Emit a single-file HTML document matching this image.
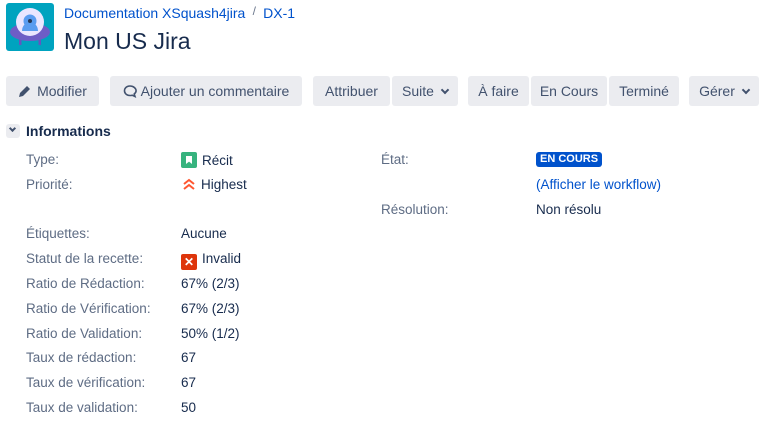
<!DOCTYPE html>
<html><head><meta charset="utf-8"><style>
*{box-sizing:border-box;margin:0;padding:0}
body{width:763px;height:425px;background:#fff;font-family:"Liberation Sans",sans-serif;color:#172b4d;position:relative;overflow:hidden;font-size:14px}
.a{position:absolute;white-space:nowrap}
.btn{position:absolute;top:76px;height:30px;background:#ebecf0;border-radius:3px;color:#42526e;font-size:14px;line-height:30px;text-align:center}
.lbl{position:absolute;left:26px;color:#5e6c84;font-size:13.5px;white-space:nowrap}
.val{position:absolute;left:181px;color:#172b4d;font-size:13.5px;white-space:nowrap}
.chev{display:inline-block;width:6px;height:6px;border-right:2px solid #42526e;border-bottom:2px solid #42526e;transform:rotate(45deg);margin-left:8px;position:relative;top:-3px}
</style></head><body>
<svg class="a" style="left:6px;top:3px" width="48" height="48" viewBox="0 0 48 48">
<rect width="48" height="48" rx="3" fill="#00a3bf"/>
<rect x="13" y="34" width="2.5" height="8" fill="#6554c0"/><rect x="32.5" y="34" width="2.5" height="8" fill="#6554c0"/>
<ellipse cx="24" cy="29" rx="20" ry="9" fill="#6e5dc6"/>
<circle cx="24" cy="19" r="14" fill="#eae6ff"/>
<path d="M16 28a8 9 0 0 1 16 0z" fill="#5a9cf0"/>
<circle cx="24" cy="18" r="6.5" fill="#5a9cf0"/><circle cx="24" cy="18" r="2" fill="#253858"/>
</svg>
<div class="a" style="left:64px;top:5px;font-size:14px;color:#0052cc">Documentation XSquash4jira <span style="color:#6b778c;font-size:12px;position:relative;top:-3px">&nbsp;/&nbsp;</span> DX-1</div>
<div class="a" style="left:64px;top:28px;font-size:23px;color:#172b4d">Mon US Jira</div>

<div class="btn" style="left:6px;width:93px"><svg width="14" height="14" viewBox="0 0 14 14" style="vertical-align:-2px;margin-right:5px"><path d="M1 13l1-4 7-7 3 3-7 7z" fill="#42526e"/></svg>Modifier</div>
<div class="btn" style="left:110px;width:192px"><svg width="14" height="14" viewBox="0 0 14 14" style="vertical-align:-2px;margin-right:4px"><path d="M7 2C3.5 2 1.5 4.3 1.5 6.8S3.5 11.5 7 11.5c.8 0 1.5-.1 2.1-.3L12 12.5l-.8-2.5c1.2-.9 1.9-2 1.9-3.2C13.1 4.3 10.5 2 7 2z" fill="none" stroke="#42526e" stroke-width="1.6"/></svg>Ajouter un commentaire</div>
<div class="btn" style="left:313px;width:77px">Attribuer</div>
<div class="btn" style="left:392px;width:66px">Suite<span class="chev"></span></div>
<div class="btn" style="left:468px;width:61px">À faire</div>
<div class="btn" style="left:531px;width:76px">En Cours</div>
<div class="btn" style="left:609px;width:70px">Terminé</div>
<div class="btn" style="left:689px;width:70px">Gérer<span class="chev"></span></div>

<div class="a" style="left:6px;top:124px;width:14px;height:14px;background:#ebecf0;border-radius:3px"><span class="chev" style="position:absolute;left:-4px;top:2px;width:5px;height:5px;border-color:#42526e"></span></div>
<div class="a" style="left:26px;top:123px;font-size:14px;font-weight:bold;color:#172b4d">Informations</div>

<div class="lbl" style="top:152px">Type:</div>
<div class="val" style="top:152px"><span style="display:inline-block;width:16px;height:16px;background:#36b37e;border-radius:2px;vertical-align:-3px;margin-right:5px;position:relative"><span style="position:absolute;left:5px;top:4px;width:6px;height:8px;background:#fff;clip-path:polygon(0 0,100% 0,100% 100%,50% 70%,0 100%)"></span></span>Récit</div>
<div class="lbl" style="top:177px">Priorité:</div>
<div class="val" style="top:177px"><svg width="16" height="14" viewBox="0 0 16 14" style="vertical-align:-2px;margin-right:4px"><path d="M3 7l5-4 5 4M3 12l5-4 5 4" fill="none" stroke="#ff5630" stroke-width="2"/></svg>Highest</div>
<div class="lbl" style="top:226px">Étiquettes:</div>
<div class="val" style="top:226px">Aucune</div>
<div class="lbl" style="top:251px">Statut de la recette:</div>
<div class="val" style="top:251px"><span style="display:inline-block;width:16px;height:16px;background:#de350b;border-radius:2px;vertical-align:-3px;margin-right:5px;color:#fff;font-size:12px;font-weight:bold;line-height:16px;text-align:center">✕</span>Invalid</div>
<div class="lbl" style="top:276px">Ratio de Rédaction:</div><div class="val" style="top:276px">67% (2/3)</div>
<div class="lbl" style="top:301px">Ratio de Vérification:</div><div class="val" style="top:301px">67% (2/3)</div>
<div class="lbl" style="top:326px">Ratio de Validation:</div><div class="val" style="top:326px">50% (1/2)</div>
<div class="lbl" style="top:350px">Taux de rédaction:</div><div class="val" style="top:350px">67</div>
<div class="lbl" style="top:375px">Taux de vérification:</div><div class="val" style="top:375px">67</div>
<div class="lbl" style="top:400px">Taux de validation:</div><div class="val" style="top:400px">50</div>

<div class="lbl" style="left:381px;top:152px">État:</div>
<div class="a" style="left:536px;top:152px;background:#0052cc;color:#fff;font-size:11px;font-weight:bold;padding:0 4px;height:15px;line-height:15px;border-radius:3px">EN COURS</div>
<div class="val" style="left:536px;top:177px;color:#0052cc">(Afficher le workflow)</div>
<div class="lbl" style="left:381px;top:202px">Résolution:</div>
<div class="val" style="left:536px;top:202px">Non résolu</div>
</body></html>
